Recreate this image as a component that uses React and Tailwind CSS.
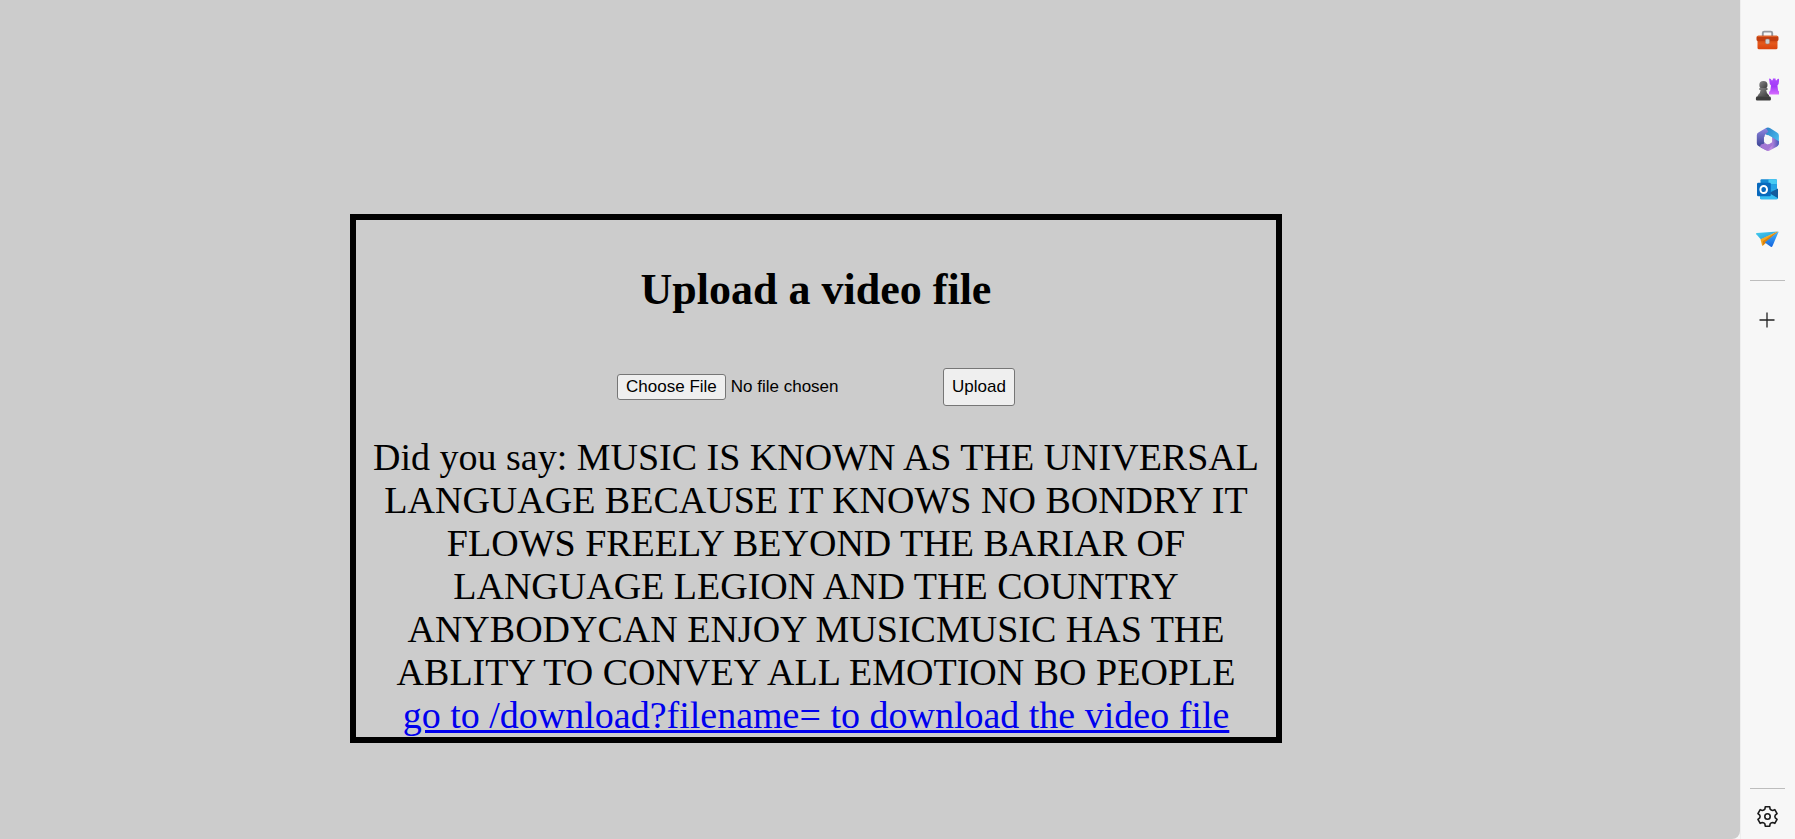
const BriefcaseIcon = () => (
  <svg width="24" height="24" viewBox="-0.500 0 24 24" aria-hidden="true">
    <defs>
      <linearGradient id="case" x1="0" y1="0" x2="0" y2="1">
        <stop offset="0" stopColor="#c23c0c" />
        <stop offset=".4" stopColor="#e5591c" />
        <stop offset="1" stopColor="#d9430c" />
      </linearGradient>
    </defs>
    <path d="M7.300 9V6Q7.300 4.600 8.700 4.600h6.600q1.400 0 1.400 1.400v3" fill="none" stroke="#96999f" strokeWidth="1.900" />
    <path d="M2 12h20v8.700q0 1.500-1.500 1.500h-17q-1.500 0-1.500-1.500z" fill="url(#case)" />
    <path d="M2.600 8.800h18.800q1.600 0 1.600 1.600v2q0 1.600-1.600 1.600H2.600Q1 14 1 12.400v-2q0-1.600 1.600-1.600z" fill="#c23e10" />
    <path d="M1.300 10q.3-1.200 1.700-1.200h18q1.300 0 1.700 1.200z" fill="#df6229" />
    <rect x="9.900" y="12" width="4.200" height="5" rx="1.400" fill="#cdd0d3" stroke="#8f7b73" strokeWidth=".5" />
  </svg>
);

const ChessIcon = () => (
  <svg width="24" height="24" viewBox="-0.500 0 24 24" aria-hidden="true">
    <defs>
      <linearGradient id="pawn" x1="0" y1="0" x2="1" y2="1">
        <stop offset="0" stopColor="#8a8a8a" />
        <stop offset="1" stopColor="#383838" />
      </linearGradient>
      <linearGradient id="rook" x1="0" y1="0" x2="0" y2="1">
        <stop offset="0" stopColor="#b04bff" />
        <stop offset=".5" stopColor="#a23bf7" />
        <stop offset="1" stopColor="#d86cff" />
      </linearGradient>
    </defs>
    <path
      d="M13.500 1.600l2 .3.400 1.300h1.300l.2-1.800h2.600l.2 1.800h1.300l.4-1.300 2-.3-.8 5.500-1.200 1.300.7 5 1.200 1.600v2.500H13.600V15l1.200-1.600.7-5-1.200-1.300z"
      fill="url(#rook)"
    />
    <circle cx="7.900" cy="8" r="4.100" fill="url(#pawn)" />
    <path
      d="M4.100 11h7.600q1.200 1 0 2h-1q.2 3.500 2.800 5.300v1.500H2.300v-1.500q2.600-1.800 2.800-5.300h-1q-1.200-1 0-2z"
      fill="url(#pawn)"
    />
    <path d="M2.300 19.300h11.200q1.900 0 1.900 1.700v1.600q0 .8-.8.800H1.200q-.8 0-.8-.8V21q0-1.700 1.900-1.700z" fill="#3c3c3c" />
  </svg>
);

const HexagonIcon = () => (
  <svg width="24" height="24" viewBox="0 0.500 22.500 22.500" aria-hidden="true">
    <defs>
      <linearGradient id="hexTop" x1="0" y1="0" x2="1" y2="1">
        <stop offset="0" stopColor="#2a7fc4" />
        <stop offset="1" stopColor="#50c9f8" />
      </linearGradient>
      <linearGradient id="hexLeft" x1="0" y1="0" x2="0" y2="1">
        <stop offset="0" stopColor="#8f86e0" />
        <stop offset="1" stopColor="#37408f" />
      </linearGradient>
      <linearGradient id="hexBottom" x1="0" y1="0" x2="1" y2="0">
        <stop offset="0" stopColor="#8860c5" />
        <stop offset=".55" stopColor="#c08be0" />
        <stop offset="1" stopColor="#4a55b8" />
      </linearGradient>
    </defs>
    <path d="M10.300 1.500q2-1 4 .2l6.300 4q1.800.9 1.800 2.800v7.300q0 2-1.800 2.800L15.800 16v-5.500L9.500 7z" fill="url(#hexTop)" />
    <path d="M15.800 10.200l6.600 3.600v2q0 2-1.700 2.900l-6.500 3.700q-2 1.100-4 0l-4-2.300 9.600-5z" fill="url(#hexBottom)" />
    <path
      d="M10.300 1.500L12.500 5q-3.600 2-3.600 5v6.500l1.700.9 3-.4-7.200 3.200-3.100-1.800q-1.600-.9-1.600-2.700V8.200q0-1.800 1.500-2.600z"
      fill="url(#hexLeft)"
    />
    <path d="M5.500 16.800l4.300-1 2.700 1.500 3.300-2 .8 2-5 5q-1 .2-2-.4l-5-3z" fill="#a477d4" />
    <path d="M12.200 7.900l3.800 2.200v4.300l-3.800 2.200-3.800-2.200v-4.300z" fill="#f7f7f7" />
  </svg>
);

const MailIcon = () => (
  <svg width="24" height="24" viewBox="-1 -0.500 24 24" aria-hidden="true">
    <path d="M5.500 1.800h14.400q1 0 1 1V12H4.500V2.800q0-1 1-1z" fill="#1689d3" />
    <path d="M12.500 1.800h7.400q1 0 1 1v4h-8.400z" fill="#46cbf4" />
    <path d="M12.500 6.800h8.400V12h-8.400z" fill="#23a4e6" />
    <path d="M4 11.500l18 .5v8.500q0 1.300-1.300 1.300H5.300Q4 21.800 4 20.500z" fill="#1aa4e4" />
    <path d="M22 11v9.800L13 15.500z" fill="#145c9d" />
    <path d="M12.500 15.400l9.300 5.300q-.4 1.100-1.500 1.100H5.300Q4 21.800 4 20.500V19z" fill="#35bdf1" />
    <rect x="1" y="5.200" width="13.800" height="13.600" rx="1.200" fill="#0869bd" />
    <ellipse cx="7.700" cy="12" rx="3.300" ry="3.600" fill="none" stroke="#fff" strokeWidth="2" />
  </svg>
);

const PlaneIcon = () => (
  <svg width="24" height="24" viewBox="-0.500 0 24 24" aria-hidden="true">
    <defs>
      <linearGradient id="wing" x1="0" y1="0" x2="1" y2="1">
        <stop offset="0" stopColor="#48d1ee" />
        <stop offset="1" stopColor="#1f91d8" />
      </linearGradient>
      <linearGradient id="body" x1="0" y1="0" x2="0" y2="1">
        <stop offset="0" stopColor="#42b4fa" />
        <stop offset="1" stopColor="#1465df" />
      </linearGradient>
    </defs>
    <path d="M.8 7.300q-.9-1 .4-1.300L22 4.500 5.500 12.400z" fill="url(#wing)" />
    <path d="M22 4.500L5 12.200l1.600 6.300q.4.600 1 .1L22.500 5z" fill="#f6a61e" />
    <path d="M22 4.500L7.300 14.200v4.300z" fill="#d98212" />
    <path d="M22.800 4.500L9.300 15.400l6 4.300q1 .6 1.600-.5L22.900 5.300q.2-.7-.1-.8z" fill="url(#body)" />
  </svg>
);

const PlusIcon = () => (
  <svg width="16" height="16" viewBox="0 0 16 16" aria-hidden="true">
    <path d="M8 .5v15M.5 8h15" stroke="#222" strokeWidth="1.300" />
  </svg>
);

const GearIcon = () => (
  <svg
    width="24"
    height="24"
    viewBox="-12.500 -11.500 24 24"
    fill="none"
    stroke="#1a1a1a"
    strokeWidth="1.600"
    strokeLinejoin="round"
    aria-hidden="true"
  >
    <path d="M-2.250-9.740H2.250L2.600-7.460Q3.500-6.060 5.160-6L7.310-6.820 9.560-2.920 7.760-1.460Q7 0 7.760 1.460L9.560 2.920 7.310 6.820 5.160 6Q3.500 6.060 2.600 7.460L2.250 9.740H-2.250L-2.600 7.460Q-3.500 6.060-5.160 6L-7.310 6.820-9.560 2.920-7.760 1.460Q-7 0-7.760-1.460L-9.560-2.920-7.310-6.820-5.160-6Q-3.500-6.060-2.600-7.460z" />
    <circle cx="0" cy="0" r="2.700" />
  </svg>
);

const apps = [
  { label: "Tools", Icon: BriefcaseIcon },
  { label: "Games", Icon: ChessIcon },
  { label: "Microsoft 365", Icon: HexagonIcon },
  { label: "Outlook", Icon: MailIcon },
  { label: "Drop", Icon: PlaneIcon },
];

function SideButton({ label, children }) {
  return (
    <button type="button" aria-label={label} className="flex h-[50px] w-full shrink-0 items-center justify-center">
      {children}
    </button>
  );
}

function Sidebar() {
  return (
    <aside className="flex w-[55px] shrink-0 flex-col items-center border-l border-[#eeeeee] bg-[#f7f7f7] pt-[14px] pr-[2px]">
      {apps.map(({ label, Icon }) => (
        <SideButton key={label} label={label}>
          <Icon />
        </SideButton>
      ))}
      <hr className="mt-4 mb-[14px] w-[35px] border-[#bdbdbd]" />
      <SideButton label="Customize">
        <PlusIcon />
      </SideButton>
      <hr className="mt-auto w-[35px] border-[#bdbdbd]" />
      <button type="button" aria-label="Settings" className="flex w-full justify-center pt-4 pb-[10px]">
        <GearIcon />
      </button>
    </aside>
  );
}

export default function App() {
  return (
    <div className="flex min-h-screen bg-[#f7f7f7]">
      <main className="min-w-0 flex-1 rounded-br-lg bg-[#cccccc] pt-[214px] pr-[458px] pl-[350px] font-['Liberation_Serif',serif] text-black">
        <section className="border-6 border-black pt-11 text-center">
          <h1 className="text-[44px] leading-[52px] font-bold">Upload a video file</h1>
          <form
            className="mt-[52px] flex items-center justify-center gap-[6px] font-['Liberation_Sans',sans-serif] text-[17px] leading-5"
            onSubmit={(event) => event.preventDefault()}
          >
            <input
              type="file"
              aria-label="Video file"
              className="w-80 file:mr-[5px] file:h-[26px] file:rounded-[3px] file:border file:border-solid file:border-[#767676] file:bg-[#efefef] file:px-2 file:leading-5"
            />
            <button type="submit" className="h-[38px] rounded-[3px] border border-[#767676] bg-[#efefef] px-2">
              Upload
            </button>
          </form>
          <div className="mt-[30px] text-[38px] leading-[43px]">
            <p>
              Did you say: MUSIC IS KNOWN AS THE UNIVERSAL LANGUAGE BECAUSE IT KNOWS NO BONDRY IT FLOWS FREELY BEYOND
              THE BARIAR OF LANGUAGE LEGION AND THE COUNTRY ANYBODYCAN ENJOY MUSICMUSIC HAS THE ABLITY TO CONVEY ALL
              EMOTION BO PEOPLE
            </p>
            <a href="/download?filename=" className="text-[#0000ee] underline">
              go to /download?filename= to download the video file
            </a>
          </div>
        </section>
      </main>
      <Sidebar />
    </div>
  );
}
